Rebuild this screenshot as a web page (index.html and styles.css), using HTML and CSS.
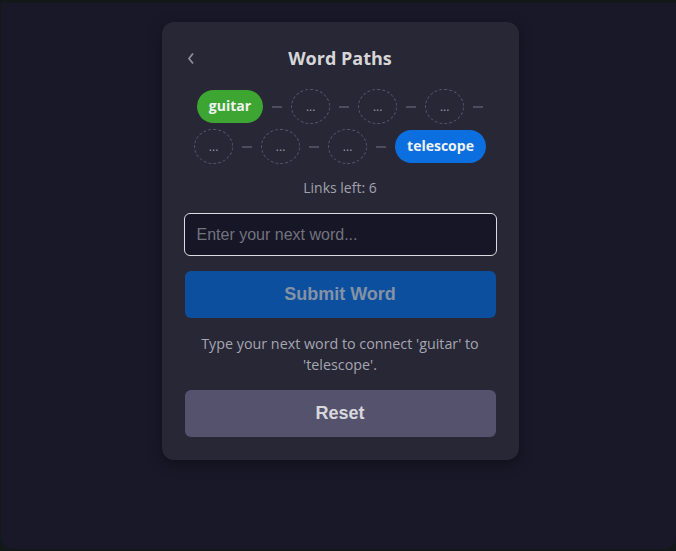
FILE: index.html
```html
<!DOCTYPE html>
<html lang="en">
  <head>
    <meta charset="UTF-8" />
    <meta name="viewport" content="width=device-width, initial-scale=1.0" />
    <title>Word Paths</title>
    <link rel="stylesheet" href="styles.css">
  </head>
  <body>
    <div class="screen">
      <div class="card">
        <div class="header">
          <button class="back-btn" aria-label="Back">
            <svg width="8" height="13" viewBox="0 0 8 13">
              <polyline points="6,1.5 2,6.5 6,11.5" fill="none" stroke="#8d8d99" stroke-width="1.8" />
            </svg>
          </button>
          <h2>Word Paths</h2>
          <span></span>
        </div>

        <div class="chain">
          <span class="word start">guitar</span>
          <span class="link"></span>
          <span class="slot">...</span>
          <span class="link"></span>
          <span class="slot">...</span>
          <span class="link"></span>
          <span class="slot">...</span>
          <span class="link"></span>
          <span class="slot">...</span>
          <span class="link"></span>
          <span class="slot">...</span>
          <span class="link"></span>
          <span class="slot">...</span>
          <span class="link"></span>
          <span class="word end">telescope</span>
        </div>

        <p class="links-left">Links left: 6</p>

        <input type="text" class="word-input" placeholder="Enter your next word..." />
        <button class="submit-btn" disabled>Submit Word</button>

        <p class="hint">Type your next word to connect 'guitar' to 'telescope'.</p>

        <button class="reset-btn">Reset</button>
      </div>
    </div>
  </body>
</html>
```

FILE: styles.css
```css
* {
  margin: 0;
  padding: 0;
  box-sizing: border-box;
}

body {
  background: #131819;
  font-family: "Open Sans", "Noto Sans", Arial, sans-serif;
  overflow: hidden;
}

.screen {
  margin: 3px 0 0 1px;
  height: 546px;
  background: #181828;
  border-radius: 0 0 12px 12px;
  display: flex;
  justify-content: center;
  padding: 19px 0 0 3px;
}

.card {
  width: 357px;
  height: 438px;
  background: #272736;
  border-radius: 12px;
  padding: 22px;
  box-shadow: 0 4px 14px rgba(0, 0, 0, 0.35);
}

.header {
  display: grid;
  grid-template-columns: 1fr auto 1fr;
  align-items: center;
  height: 27px;
  margin-bottom: 18px;
}

.back-btn {
  background: none;
  border: none;
  width: 20px;
  padding-top: 5px;
  padding-left: 3px;
  text-align: left;
  cursor: pointer;
}

.header h2 {
  font-size: 18px;
  font-weight: 700;
  color: #d6d6d6;
}

.chain {
  display: flex;
  flex-wrap: wrap;
  justify-content: center;
  align-items: center;
  column-gap: 9px;
  row-gap: 5px;
}

.word {
  height: 33px;
  line-height: 32px;
  padding: 0 12px;
  border-radius: 17px;
  color: #f2f2f2;
  font-size: 14px;
  font-weight: 700;
}

.start {
  background: #3da532;
}

.end {
  background: #0b6fe0;
}

.slot {
  width: 39px;
  height: 35px;
  border: 1px dashed #56566a;
  border-radius: 50%;
  color: #9a9aa6;
  font-size: 12px;
  line-height: 33px;
  text-align: center;
}

.link {
  width: 10px;
  height: 2px;
  background: #4d4d5e;
}

.links-left {
  text-align: center;
  color: #a2a2ad;
  font-size: 14px;
  margin-top: 14px;
  margin-bottom: 16px;
}

.word-input {
  display: block;
  width: 100%;
  height: 43px;
  background: #161626;
  border: 1px solid #dcdce0;
  border-radius: 6px;
  padding: 0 12px;
  font-family: "Liberation Sans", Arial, sans-serif;
  font-size: 16px;
  color: #ddd;
  outline: none;
}

.word-input::placeholder {
  color: #73737e;
}

.submit-btn,
.reset-btn {
  display: block;
  width: 311px;
  height: 47px;
  margin-left: 1px;
  border: none;
  border-radius: 6px;
  font-family: "Liberation Sans", Arial, sans-serif;
  font-size: 18px;
  font-weight: 700;
}

.submit-btn {
  margin-top: 15px;
  background: #0d4f9f;
  color: #8492a6;
}

.hint {
  margin: 15px 8px 15px;
  text-align: center;
  color: #a6a6b0;
  font-size: 14.3px;
  line-height: 21px;
}

.reset-btn {
  background: #54526d;
  color: #d8d8dc;
  cursor: pointer;
}
```
